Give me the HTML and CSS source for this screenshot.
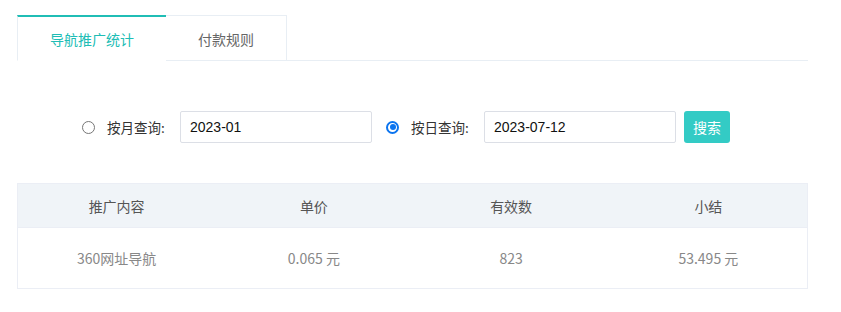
FILE: index.html
```html
<!DOCTYPE html>
<html lang="zh">
<head>
<meta charset="utf-8">
<link rel="stylesheet" href="styles.css">
</head>
<body>
<div class="page">
  <div class="tabs">
    <div class="tab active">导航推广统计</div>
    <div class="tab">付款规则</div>
  </div>
  <div class="search">
    <label class="opt"><span class="radio"></span><span class="lbl">按月查询:</span></label>
    <div class="input">2023-01</div>
    <label class="opt opt2"><span class="radio checked"></span><span class="lbl">按日查询:</span></label>
    <div class="input">2023-07-12</div>
    <button class="btn">搜索</button>
  </div>
  <div class="table">
    <div class="row head">
      <div class="cell">推广内容</div>
      <div class="cell">单价</div>
      <div class="cell">有效数</div>
      <div class="cell">小结</div>
    </div>
    <div class="row body">
      <div class="cell">360网址导航</div>
      <div class="cell">0.065 元</div>
      <div class="cell">823</div>
      <div class="cell">53.495 元</div>
    </div>
  </div>
</div>
</body>
</html>
```
FILE: styles.css
```css
* { box-sizing: border-box; }
body {
  margin: 0;
  background: #fff;
  font-family: "Noto Sans CJK SC", "Noto Sans", sans-serif;
  font-size: 14px;
}
.page {
  padding: 15px 0 0 17px;
  width: 808px;
}
.tabs {
  display: flex;
  height: 46px;
  border-bottom: 1px solid #e8eef4;
}
.tab {
  height: 46px;
  display: flex;
  align-items: center;
  justify-content: center;
  color: #666;
  border-top: 1px solid #e8eef4;
  border-right: 1px solid #e8eef4;
  width: 121px;
  padding-top: 1px;
}
.tab.active {
  width: 149px;
  color: #20bdb5;
  border-top: 2px solid #20bdb5;
  border-left: 1px solid #e8eef4;
  border-right: none;
  background: #fff;
  height: 46px;
  margin-bottom: -1px;
  padding-top: 0;
  border-bottom: 1px solid #fff;
}
.search {
  display: flex;
  align-items: center;
  height: 32px;
  margin-top: 50px;
  padding-left: 65px;
}
.opt {
  display: flex;
  align-items: center;
  width: 98px;
  color: #333;
  font-size: 13px;
}
.opt2 { margin-left: 14px; }
.radio {
  width: 13px;
  height: 13px;
  border: 1px solid #767676;
  border-radius: 50%;
  margin-right: 12px;
  display: inline-block;
  flex: none;
}
.radio.checked {
  border: 2px solid #0b74ef;
  background: #fff;
  position: relative;
}
.radio.checked::after {
  content: "";
  position: absolute;
  left: 1.5px;
  top: 1.5px;
  width: 6px;
  height: 6px;
  border-radius: 50%;
  background: #0b74ef;
}
.lbl { white-space: nowrap; font-size: 13.5px; }
.input {
  width: 192px;
  height: 32px;
  border: 1px solid #dcdfe6;
  border-radius: 2px;
  padding-left: 9px;
  display: flex;
  align-items: center;
  color: #111;
  font-family: "Liberation Sans", "Noto Sans", sans-serif;
  font-size: 14px;
  flex: none;
}
.btn {
  margin-left: 8px;
  width: 46px;
  height: 32px;
  border: none;
  border-radius: 3px;
  background: #33cbc5;
  color: #fff;
  font-family: "Noto Sans CJK SC", sans-serif;
  font-size: 14px;
  padding: 0;
  flex: none;
}
.table {
  margin-top: 40px;
  width: 791px;
  border: 1px solid #ebeef5;
}
.row {
  display: grid;
  grid-template-columns: repeat(4, 1fr);
}
.row.head {
  height: 43px;
  background: #f0f4f8;
  color: #555;
}
.row.body {
  height: 61px;
  color: #888;
  border-top: 1px solid #ebeef5;
}
.cell {
  display: flex;
  align-items: center;
  justify-content: center;
  font-size: 14px;
}
```
